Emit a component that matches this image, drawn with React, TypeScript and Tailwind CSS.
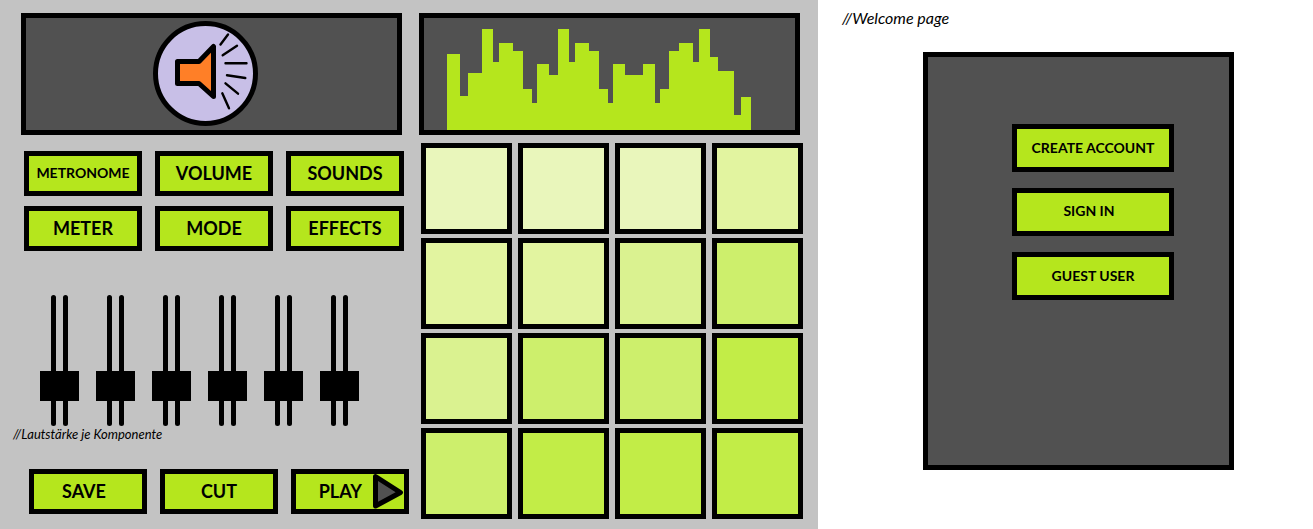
import { useState } from "react";
import type { ReactNode } from "react";

const pads = [
  "bg-[#e9f6bb]", "bg-[#e9f6bb]", "bg-[#e9f6bb]", "bg-[#e2f4a0]",
  "bg-[#e2f4a0]", "bg-[#e2f4a0]", "bg-[#daf290]", "bg-[#cdef6c]",
  "bg-[#daf290]", "bg-[#cdef6c]", "bg-[#cdef6c]", "bg-[#c2ed47]",
  "bg-[#cdef6c]", "bg-[#c2ed47]", "bg-[#c2ed47]", "bg-[#c2ed47]",
];

// [left, right, top] of every bar, in display pixels
const bars = [
  [23, 36, 36], [36, 44, 78], [44, 58, 55], [58, 69, 11], [69, 75, 44],
  [75, 89, 25], [89, 99, 33], [99, 108, 71], [108, 113, 85], [113, 125, 46],
  [125, 134, 57], [134, 145, 11], [145, 151, 44], [151, 165, 25], [165, 175, 33],
  [175, 184, 71], [184, 189, 85], [189, 201, 46], [201, 219, 57], [219, 231, 46],
  [231, 236, 85], [236, 245, 71], [245, 255, 33], [255, 269, 25], [269, 275, 44],
  [275, 286, 11], [286, 294, 39], [294, 310, 53], [310, 317, 97], [317, 327, 79],
];

function Speaker() {
  return (
    <svg width="105" height="105" viewBox="0 0 105 105" aria-label="Speaker" role="img">
      <circle cx="52.5" cy="52.5" r="50" fill="#c8bfe7" stroke="#000" strokeWidth="5" />
      <path
        d="M24.5 40.5H46L60.5 25.5V75.5L46 62.5H24.5Z"
        fill="#ff7f27"
        stroke="#000"
        strokeWidth="5"
        strokeLinejoin="round"
      />
      <path
        d="M67.5 23.5 75 13.5M69.7 34.3 84 24.7M72.5 42.3H93.5M74 54.3 92.3 57M72.5 62.3 85 72.7M69.3 72.3 76 87.3"
        fill="none"
        stroke="#000"
        strokeWidth="2.4"
        strokeLinecap="round"
      />
    </svg>
  );
}

function Spectrum() {
  return (
    <svg
      viewBox="0 0 371 112"
      preserveAspectRatio="none"
      shapeRendering="crispEdges"
      className="block h-full w-full"
      aria-label="Spectrum"
      role="img"
    >
      {bars.map(([left, right, top]) => (
        <rect key={left} x={left} y={top} width={right - left} height={112 - top} fill="#b5e61d" />
      ))}
    </svg>
  );
}

function Key({ className = "h-[45px] justify-center pb-0.5 text-lg", children }: { className?: string; children: ReactNode }) {
  return (
    <button
      type="button"
      className={`flex items-center border-5 border-black bg-[#b5e61d] font-bold whitespace-nowrap ${className}`}
    >
      {children}
    </button>
  );
}

function Fader({ label }: { label: string }) {
  const [level, setLevel] = useState(25);
  return (
    <div className="grid h-[131px] w-[39px]">
      <div className="col-start-1 row-start-1 flex justify-center gap-[7px]">
        <span className="w-[5px] rounded-full bg-black" />
        <span className="w-[5px] rounded-full bg-black" />
      </div>
      <input
        type="range"
        aria-label={label}
        value={level}
        onChange={(e) => setLevel(Number(e.target.value))}
        className="col-start-1 row-start-1 h-[131px] w-[39px] appearance-none bg-transparent [direction:rtl] [writing-mode:vertical-lr] [&::-webkit-slider-thumb]:h-[30px] [&::-webkit-slider-thumb]:w-[39px] [&::-webkit-slider-thumb]:appearance-none [&::-webkit-slider-thumb]:bg-black"
      />
    </div>
  );
}

export default function App() {
  return (
    <div className="grid min-h-screen grid-cols-[818fr_495fr] bg-white font-['Lato',sans-serif] text-black">
      <main className="grid grid-cols-[397fr_386fr] items-start gap-x-[9px] bg-[#c3c3c3] px-[13px] pt-[13px] pb-[10px]">
        <div>
          <div className="mr-2 ml-2 flex h-[122px] items-center justify-center border-5 border-black bg-[#515151] pr-3 pb-0.5">
            <Speaker />
          </div>
          <div className="mt-4 mr-[6px] ml-[11px] grid grid-cols-3 gap-x-[13px] gap-y-[10px]">
            <Key className="h-[45px] justify-center pb-0.5 text-sm">METRONOME</Key>
            <Key>VOLUME</Key>
            <Key>SOUNDS</Key>
            <Key>METER</Key>
            <Key>MODE</Key>
            <Key>EFFECTS</Key>
          </div>
          <div className="mt-11 ml-[27px] flex gap-[17px]">
            <Fader label="Metronome" />
            <Fader label="Volume" />
            <Fader label="Sounds" />
            <Fader label="Meter" />
            <Fader label="Mode" />
            <Fader label="Effects" />
          </div>
          <p className="text-[13px] leading-4 italic">//Lautstärke je Komponente</p>
          <div className="mt-[27px] ml-4 mr-px grid grid-cols-3 gap-x-[13px]">
            <Key className="h-[45px] justify-center pr-2 pb-0.5 text-lg">SAVE</Key>
            <Key>CUT</Key>
            <Key className="h-[45px] justify-end gap-[10px] text-lg">
              <span className="pb-0.5">PLAY</span>
              <svg width="32" height="35" viewBox="0 0 32 35" aria-hidden="true">
                <path d="M3.5 2.5 28.5 18.5 3.5 32Z" fill="#515151" stroke="#000" strokeWidth="5" strokeLinejoin="round" />
              </svg>
            </Key>
          </div>
        </div>
        <div>
          <div className="mr-[5px] h-[122px] border-5 border-black bg-[#515151]">
            <Spectrum />
          </div>
          <div className="mx-[2px] mt-2 grid grid-cols-4 gap-x-[6px] gap-y-1">
            {pads.map((tone, i) => (
              <button
                key={i}
                type="button"
                aria-label={`Pad ${i + 1}`}
                className={`aspect-square border-5 border-black ${tone}`}
              />
            ))}
          </div>
        </div>
      </main>
      <section className="px-6 pt-2">
        <p className="text-base leading-5 italic">//Welcome page</p>
        <div className="mt-6 mr-[55px] ml-[81px] flex h-[418px] flex-col items-start gap-4 border-5 border-black bg-[#515151] pt-[67px] pl-[84px]">
          <Key className="h-12 w-[162px] justify-center text-sm">CREATE ACCOUNT</Key>
          <Key className="h-12 w-[162px] justify-center pr-2 pb-0.5 text-sm">SIGN IN</Key>
          <Key className="h-12 w-[162px] justify-center text-sm">GUEST USER</Key>
        </div>
      </section>
    </div>
  );
}
